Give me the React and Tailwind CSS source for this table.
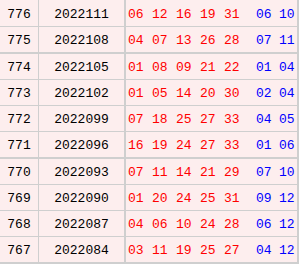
import React from "react";

const rows = [
  { no: "776", issue: "2022111", red: ["06", "12", "16", "19", "31"], blue: ["06", "10"] },
  { no: "775", issue: "2022108", red: ["04", "07", "13", "26", "28"], blue: ["07", "11"], thick: true },
  { no: "774", issue: "2022105", red: ["01", "08", "09", "21", "22"], blue: ["01", "04"] },
  { no: "773", issue: "2022102", red: ["01", "05", "14", "20", "30"], blue: ["02", "04"] },
  { no: "772", issue: "2022099", red: ["07", "18", "25", "27", "33"], blue: ["04", "05"] },
  { no: "771", issue: "2022096", red: ["16", "19", "24", "27", "33"], blue: ["01", "06"], thick: true },
  { no: "770", issue: "2022093", red: ["07", "11", "14", "21", "29"], blue: ["07", "10"] },
  { no: "769", issue: "2022090", red: ["01", "20", "24", "25", "31"], blue: ["09", "12"] },
  { no: "768", issue: "2022087", red: ["04", "06", "10", "24", "28"], blue: ["06", "12"] },
  { no: "767", issue: "2022084", red: ["03", "11", "19", "25", "27"], blue: ["04", "12"], last: true },
];

export default function App() {
  return (
    <div
      className="w-[299px] h-[264px] overflow-hidden bg-white text-[13px] leading-none"
      style={{ fontFamily: '"Liberation Mono", "DejaVu Sans Mono", monospace' }}
    >
      <div className="w-[299px] border-r-2 border-[#cfcfcf]">
        {rows.map((r, i) => (
          <div
            key={r.no}
            className={`flex bg-[#fdeeee] border-[#cfcfcf] ${
              i === 0 ? "h-[27px]" : "h-[26px]"
            } ${r.thick ? "h-[27px] border-b-2" : r.last ? "h-[28px] border-b-[3px]" : "border-b"}`}
          >
            <div className="w-[39px] shrink-0 flex items-center justify-center border-r border-[#cfcfcf] text-black pt-[2px]">
              {r.no}
            </div>
            <div className="w-[87px] shrink-0 flex items-center justify-center border-r-2 border-[#cfcfcf] text-black pt-[2px]">
              {r.issue}
            </div>
            <div className="flex items-center pl-[2px] pt-[2px]">
              {r.red.map((n, j) => (
                <span key={j} className="w-[24px] text-[#ff0000]">
                  {n}
                </span>
              ))}
              <span className="w-[8px]" />
              {r.blue.map((n, j) => (
                <span key={j} className="w-[23px] text-[#0000ff]">
                  {n}
                </span>
              ))}
            </div>
          </div>
        ))}
      </div>
    </div>
  );
}
